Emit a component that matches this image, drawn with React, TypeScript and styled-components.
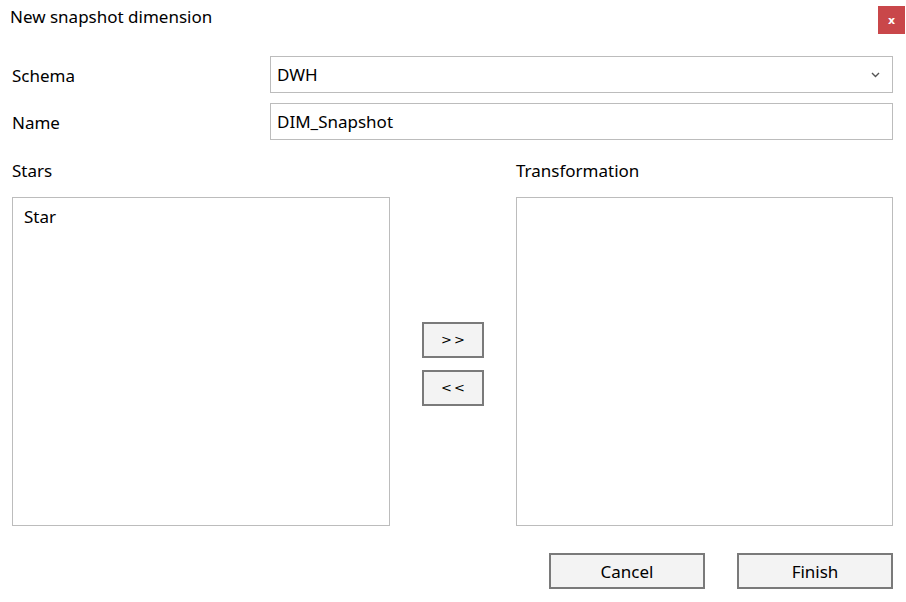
import React from "react";
import styled, { createGlobalStyle } from "styled-components";

const Global = createGlobalStyle`
  html, body { margin: 0; padding: 0; background: #ffffff; }
  body { font-family: "Segoe UI", "Noto Sans", "Open Sans", sans-serif; color: #000; }
  * { box-sizing: border-box; }
`;

const Dialog = styled.div`
  width: 906px;
  height: 602px;
  background: #ffffff;
  display: flex;
  flex-direction: column;
  overflow: hidden;
`;

const Header = styled.div`
  height: 56px;
  display: flex;
  justify-content: space-between;
  align-items: flex-start;
  padding: 0 1px 0 10px;
`;

const Title = styled.div`
  font-size: 17px;
  line-height: 20px;
  padding-top: 7px;
`;

const CloseButton = styled.button`
  margin-top: 6px;
  width: 27px;
  height: 28px;
  border: none;
  background: #c9474a;
  color: #ffffff;
  font-family: "DejaVu Sans", sans-serif;
  font-size: 11px;
  font-weight: bold;
  display: flex;
  align-items: center;
  justify-content: center;
  padding: 0;
`;

const Body = styled.div`
  padding: 0 13px 0 12px;
  display: flex;
  flex-direction: column;
`;

const FormGrid = styled.div`
  display: grid;
  grid-template-columns: 258px 1fr;
  grid-auto-rows: 37px;
  row-gap: 10px;
`;

const FieldLabel = styled.div`
  font-size: 17px;
  display: flex;
  align-items: center;
  padding-top: 2px;
`;

const Field = styled.div`
  border: 1px solid #bcbcbc;
  background: #fff;
  display: flex;
  align-items: center;
  justify-content: space-between;
  padding: 0 12px 0 6px;
  font-size: 17px;
`;

const Chevron = styled.svg`
  width: 9px;
  height: 6px;
`;

const Lists = styled.div`
  display: grid;
  grid-template-columns: 378px 126px 377px;
  grid-template-rows: 57px 329px;
`;

const ListLabel = styled.div`
  font-size: 17px;
  display: flex;
  align-items: center;
  padding-top: 3px;
`;

const ListBox = styled.div`
  border: 1px solid #bcbcbc;
  background: #fff;
  padding: 7px 11px;
  font-size: 17px;
`;

const Mover = styled.div`
  display: flex;
  flex-direction: column;
  align-items: center;
  justify-content: center;
  gap: 12px;
  padding-top: 4px;
`;

const SmallButton = styled.button`
  width: 62px;
  height: 36px;
  border: 2px solid #7a7a7a;
  background: #f3f3f3;
  font-family: "DejaVu Sans", sans-serif;
  font-size: 13px;
  letter-spacing: 2px;
  padding: 0 0 0 2px;
  color: #000;
`;

const Footer = styled.div`
  margin-top: 27px;
  display: flex;
  justify-content: flex-end;
  gap: 32px;
`;

const ActionButton = styled.button`
  width: 156px;
  height: 36px;
  border: 2px solid #7a7a7a;
  background: #f3f3f3;
  font-family: "Segoe UI", "Noto Sans", "Open Sans", sans-serif;
  font-size: 17px;
  color: #000;
  padding: 0;
`;

export default function App() {
  return (
    <>
      <Global />
      <Dialog>
        <Header>
          <Title>New snapshot dimension</Title>
          <CloseButton>x</CloseButton>
        </Header>
        <Body>
          <FormGrid>
            <FieldLabel>Schema</FieldLabel>
            <Field>
              <span>DWH</span>
              <Chevron viewBox="0 0 9 6">
                <path d="M1 1 L4.5 4.5 L8 1" fill="none" stroke="#555" strokeWidth="1.4" />
              </Chevron>
            </Field>
            <FieldLabel>Name</FieldLabel>
            <Field>
              <span>DIM_Snapshot</span>
            </Field>
          </FormGrid>
          <Lists>
            <ListLabel>Stars</ListLabel>
            <div />
            <ListLabel>Transformation</ListLabel>
            <ListBox>Star</ListBox>
            <Mover>
              <SmallButton>&gt;&gt;</SmallButton>
              <SmallButton>&lt;&lt;</SmallButton>
            </Mover>
            <ListBox />
          </Lists>
          <Footer>
            <ActionButton>Cancel</ActionButton>
            <ActionButton>Finish</ActionButton>
          </Footer>
        </Body>
      </Dialog>
    </>
  );
}
